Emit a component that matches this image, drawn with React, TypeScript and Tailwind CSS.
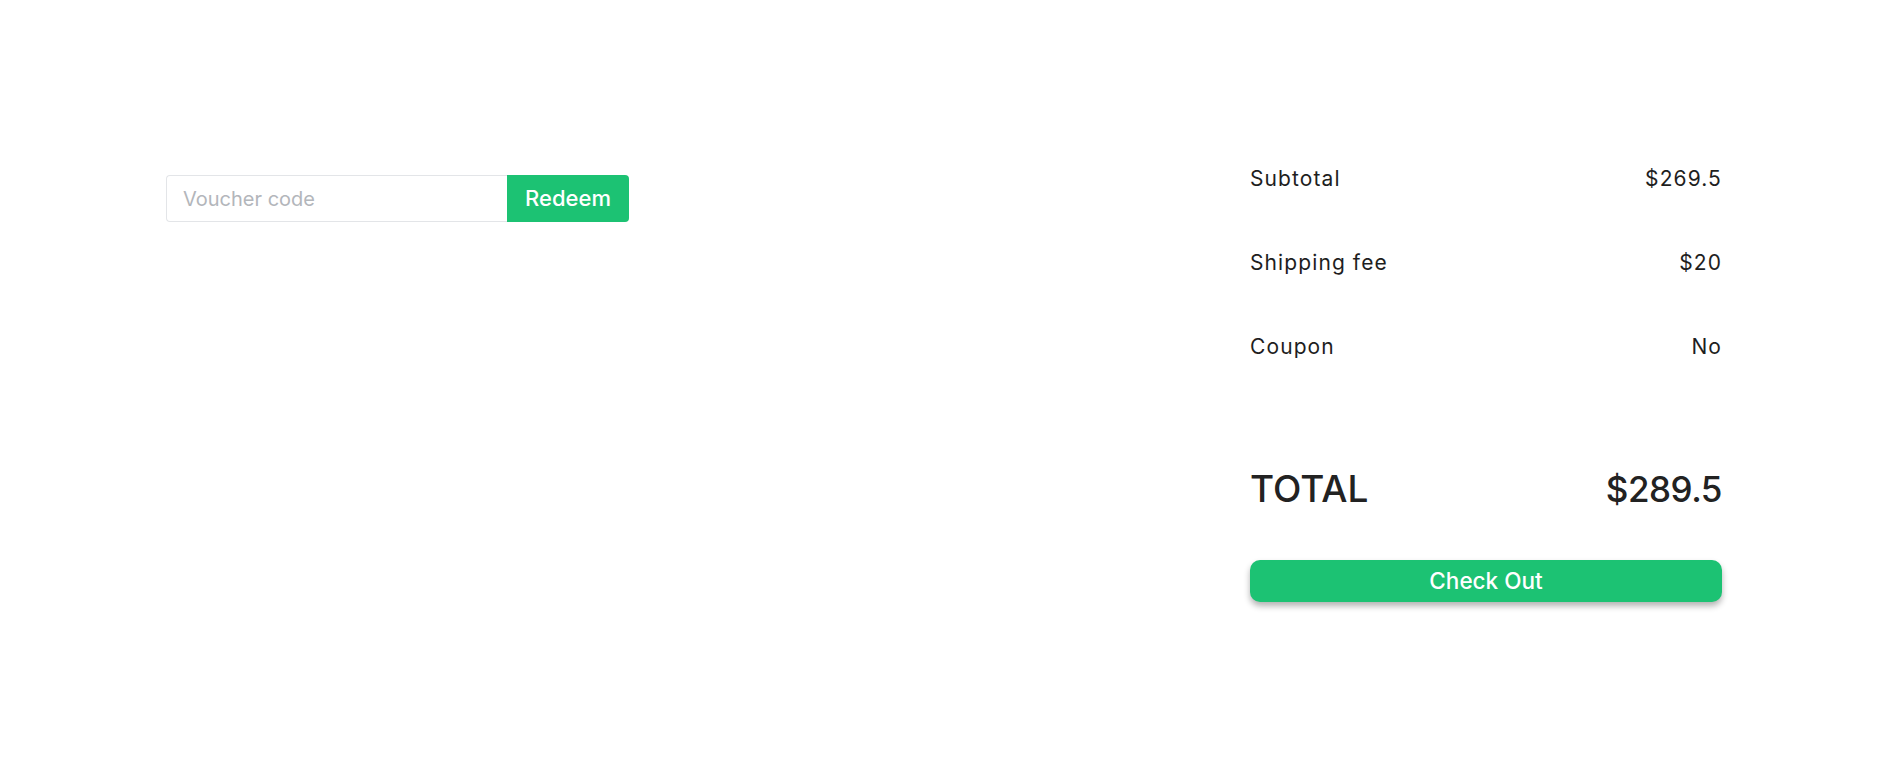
import React, { useState } from 'react'

const rows = [
  { label: 'Subtotal', value: '$269.5' },
  { label: 'Shipping fee', value: '$20' },
  { label: 'Coupon', value: 'No' },
]

const App: React.FC<{}> = () => {
  const [voucher, setVoucher] = useState<string>('')

  return (
    <div className="w-full h-[763px] bg-white flex justify-between items-start pl-[166px] pr-[170px] pt-[160px] font-['Inter',sans-serif]">
      <div className="flex mt-[15px]">
        <input
          type="text"
          value={voucher}
          onChange={(event) => setVoucher(event.target.value)}
          placeholder="Voucher code"
          className="w-[341px] h-[47px] border border-[#e3e5e8] border-r-0 rounded-l-[4px] px-4 text-[20px] text-[#333] placeholder-[#b3b6bb] outline-none"
        />
        <button className="w-[122px] h-[47px] bg-[#1cc273] text-white text-[22px] font-medium rounded-r-[4px]">Redeem</button>
      </div>

      <div className="w-[472px] flex flex-col mt-[4px]">
        <div className="flex flex-col gap-[54px] text-[21px] leading-[30px] tracking-[1.1px] text-[#1e1e1e]">
          {rows.map((row) => (
            <div key={row.label} className="flex justify-between">
              <span>{row.label}</span>
              <span>{row.value}</span>
            </div>
          ))}
        </div>
        <div className="flex justify-between mt-[105px] text-[37px] leading-[44px] text-[#222] font-medium">
          <span>TOTAL</span>
          <span className="tracking-[-0.5px] text-[35px]">$289.5</span>
        </div>
        <button className="mt-[49px] h-[42px] w-full rounded-[10px] bg-[#1cc273] text-white text-[22.5px] font-medium shadow-[0_4px_6px_rgba(0,0,0,0.3)]">Check Out</button>
      </div>
    </div>
  )
}

export default App
